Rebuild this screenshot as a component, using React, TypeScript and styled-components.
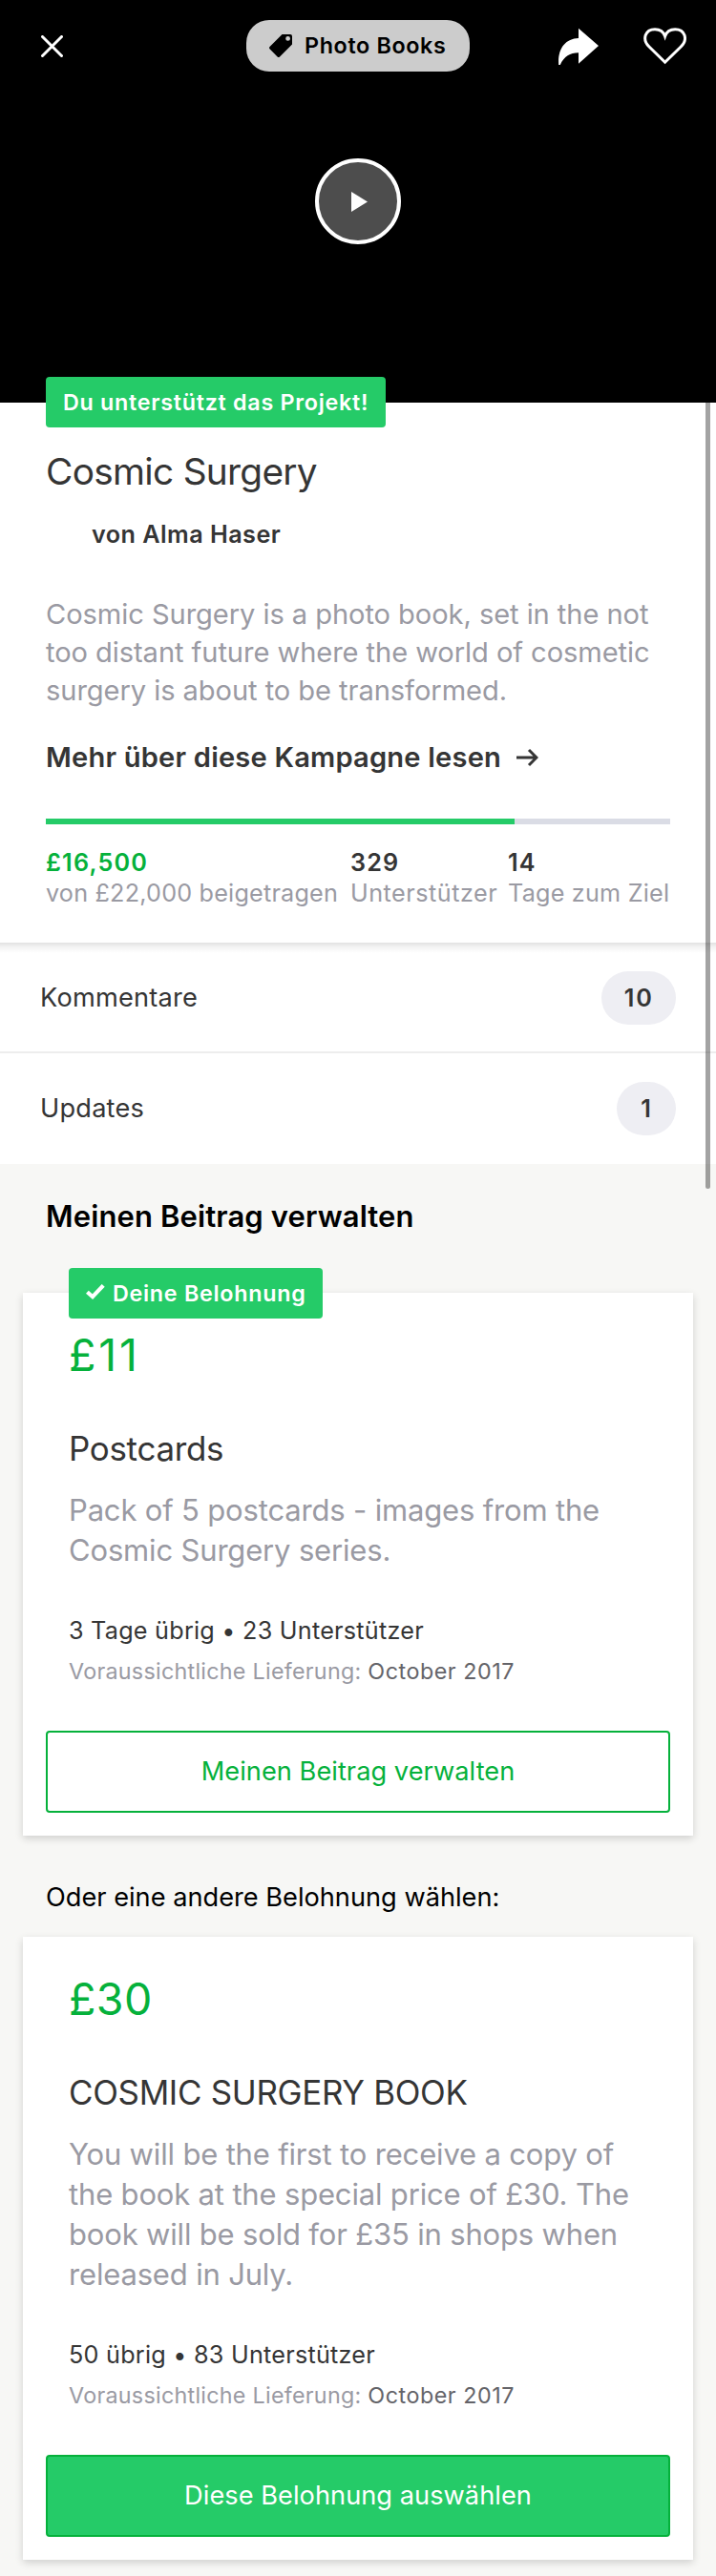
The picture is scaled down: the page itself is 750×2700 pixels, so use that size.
import React from "react";
import styled, { createGlobalStyle, css } from "styled-components";

const color = {
  green: "#25cb68",
  greenDark: "#05b13b",
  ink: "#353535",
  grey: "#9a9aa3",
  greyDark: "#646469",
  track: "#dadce5",
  pill: "#eeeef3",
  page: "#f7f7f5",
};

const type = (size: number, line: number, weight = 400, spacing = 0) => css`
  font-size: ${size}px;
  line-height: ${line}px;
  font-weight: ${weight};
  letter-spacing: ${spacing}px;
`;

const GlobalStyle = createGlobalStyle`
  *, *::before, *::after { box-sizing: border-box; }
  body { margin: 0; background: ${color.page}; color: ${color.ink}; font-family: Inter, "Liberation Sans", sans-serif; }
  h1, h2, h3, p { margin: 0; }
  button { font-family: inherit; margin: 0; cursor: pointer; }
  svg { display: block; flex: none; }
`;

const Page = styled.div`
  width: 750px;
  min-height: 2700px;
  background: ${color.page};
`;

/* Hero */
const Hero = styled.header`
  height: 422px;
  background: #000;
  display: flex;
  flex-direction: column;
  align-items: center;
`;
const TopBar = styled.div`
  width: 100%;
  padding: 21px 31px 0 43px;
  display: grid;
  grid-template-columns: 215px 234px 1fr;
  align-items: center;
`;
const IconButton = styled.button`
  padding: 0;
  border: 0;
  background: none;
  color: #fff;
`;
const Category = styled.span`
  height: 54px;
  padding-left: 24px;
  border-radius: 24px;
  background: #ccc;
  color: #000;
  display: flex;
  align-items: center;
  gap: 13px;
  ${type(23.3, 54, 600, 0.65)}
`;
const Actions = styled.div`
  display: flex;
  justify-content: flex-end;
  gap: 47px;
`;
const PlayButton = styled.button`
  width: 90px;
  height: 90px;
  margin-top: 91px;
  padding: 0 0 0 2px;
  border: 4px solid #fff;
  border-radius: 50%;
  background: #4d4d4d;
  color: #fff;
  display: flex;
  align-items: center;
  justify-content: center;
`;

/* Scrolling body */
const Body = styled.main`
  position: relative;
`;
const ScrollThumb = styled.div`
  position: absolute;
  top: 0;
  right: 6px;
  width: 5px;
  height: 824px;
  border-radius: 0 0 3px 3px;
  background: rgba(0, 0, 0, 0.36);
`;

const Ribbon = styled.div`
  width: max-content;
  height: 53px;
  padding: 0 18px;
  border-radius: 4px;
  background: ${color.green};
  color: #fff;
  display: flex;
  align-items: center;
  gap: 8px;
  ${type(23.3, 53, 600, 0.72)}
`;

const Intro = styled.section`
  display: flow-root;
  background: #fff;
  padding: 0 48px 36px;
`;
const BackerRibbon = styled(Ribbon)`
  margin-top: -27px;
`;
const Title = styled.h1`
  padding-top: 22px;
  ${type(38.8, 48, 400, -0.7)}
`;
const Byline = styled.p`
  margin-top: 26px;
  padding-left: 48px;
  ${type(25.2, 32, 600, 0.46)}
`;
const Blurb = styled.p`
  margin-top: 48px;
  color: ${color.grey};
  ${type(29.1, 40, 400, -0.07)}
`;
const MoreLink = styled.a`
  margin-top: 30px;
  display: flex;
  align-items: center;
  gap: 16px;
  ${type(29.1, 40, 600, 0.2)}
`;
const Track = styled.div`
  margin-top: 44px;
  height: 6px;
  background: ${color.track};
`;
const Fill = styled.div`
  height: 100%;
  background: ${color.green};
`;
const Stats = styled.div`
  margin-top: 24px;
  display: grid;
  grid-template-columns: 319px 165px 1fr;
  white-space: nowrap;
`;
const StatValue = styled.div<{ $accent?: boolean }>`
  color: ${(p) => (p.$accent ? color.greenDark : color.ink)};
  ${type(25.2, 32, 600, 1.2)}
`;
const StatLabel = styled.div<{ $spacing: number }>`
  color: ${color.grey};
  ${type(25.2, 32)}
  letter-spacing: ${(p) => p.$spacing}px;
`;

/* Link rows */
const LinkRows = styled.nav`
  background: linear-gradient(#e2e2e2, #f4f4f4 5px, #fff 11px) #fff;
`;
const LinkRow = styled.a`
  height: 116px;
  padding: 0 42px;
  display: flex;
  align-items: center;
  justify-content: space-between;
  ${type(27.2, 34, 400, 0.2)}

  & + & {
    border-top: 2px solid #ededed;
    height: 118px;
    margin-top: -2px;
  }
`;
const Count = styled.span`
  min-width: 62px;
  height: 56px;
  padding: 0 23px 0 24px;
  border-radius: 28px;
  background: ${color.pill};
  text-align: center;
  ${type(25.2, 56, 600, 2)}
`;

/* Rewards */
const Rewards = styled.section`
  padding: 35px 24px 17px;
`;
const Heading = styled.h2`
  padding-left: 24px;
  color: #000;
  ${type(31, 40, 600, 0.12)}
`;
const SubHeading = styled.p`
  margin-top: 48px;
  padding-left: 24px;
  color: #000;
  ${type(27.2, 34)}
`;
const Card = styled.article<{ $gap: number }>`
  position: relative;
  margin-top: ${(p) => p.$gap}px;
  padding: 37px 24px 24px;
  background: #fff;
  box-shadow: 0 3px 8px rgba(0, 0, 0, 0.16);
`;
const CardText = styled.div`
  padding: 0 24px;
`;
const RewardRibbon = styled(Ribbon)`
  position: absolute;
  top: -26px;
  left: 48px;
`;
const Price = styled.div<{ $spacing: number }>`
  color: ${color.greenDark};
  ${type(46.5, 56)}
  letter-spacing: ${(p) => p.$spacing}px;
`;
const RewardTitle = styled.h3<{ $spacing: number }>`
  margin-top: 48px;
  ${type(34.9, 44)}
  letter-spacing: ${(p) => p.$spacing}px;
`;
const RewardText = styled.p`
  margin-top: 22px;
  color: ${color.grey};
  ${type(31, 42, 400, -0.17)}
`;
const Meta = styled.p`
  margin-top: 47px;
  ${type(25.2, 32, 400, 0.24)}
`;
const Delivery = styled.p`
  margin-top: 11px;
  color: ${color.grey};
  ${type(23.3, 32, 400, 0.27)}

  span {
    color: ${color.greyDark};
    letter-spacing: 0.54px;
  }
`;
const ActionButton = styled.button<{ $filled?: boolean }>`
  width: 100%;
  height: 86px;
  margin-top: 46px;
  padding: 0;
  border: 2px solid ${color.greenDark};
  border-radius: 4px;
  background: ${(p) => (p.$filled ? color.green : "#fff")};
  color: ${(p) => (p.$filled ? "#fff" : color.greenDark)};
  ${type(27.2, 34, 400, 0.04)}
`;

const CloseIcon = () => (
  <svg width="23" height="23" viewBox="0 0 23 23" fill="none" stroke="currentColor" strokeWidth="3" strokeLinecap="round">
    <path d="M1.5 1.5l20 20M21.5 1.5l-20 20" />
  </svg>
);
const TagIcon = () => (
  <svg width="24" height="24" viewBox="0 0 24 24" fill="currentColor" fillRule="evenodd">
    <path d="M13.5 0H22Q24 0 24 2V10.5L11 23.5Q9.8 24.5 8.6 23.5L.5 15.3Q-.4 14.2 .5 13.1ZM19.6 2A2.4 2.4 0 1 0 19.6 6.8A2.4 2.4 0 1 0 19.6 2Z" />
  </svg>
);
const ShareIcon = () => (
  <svg width="42" height="39" viewBox="0 0 42 39" fill="currentColor">
    <path d="M21 .7L42 19L21 37.7V26.3C12 26.3 6 30 1.8 39H.2C-1 22 7 11.5 21 11Z" />
  </svg>
);
const HeartIcon = () => (
  <svg width="45" height="39" viewBox="0 0 45 39" fill="none" stroke="currentColor" strokeWidth="3">
    <path d="M22.6 36.2L6 20C-2 12 2 1.7 12 1.7C17.6 1.7 21.3 5.2 22.6 9C23.9 5.2 27.6 1.7 33.2 1.7C43.2 1.7 47.2 12 39.2 20Z" />
  </svg>
);
const PlayIcon = () => (
  <svg width="17" height="21" viewBox="0 0 17 21" fill="currentColor">
    <path d="M0 0L17 10.5L0 21Z" />
  </svg>
);
const ArrowIcon = () => (
  <svg width="23" height="20" viewBox="0 0 23 20" fill="none" stroke="currentColor" strokeWidth="3">
    <path d="M0 10H21M13 2l8 8-8 8" />
  </svg>
);
const CheckIcon = () => (
  <svg width="20" height="20" viewBox="0 0 20 20" fill="none" stroke="currentColor" strokeWidth="4.2">
    <path d="M1.4 8.2L7 13.2L18.2 1.4" />
  </svg>
);

type Reward = {
  price: string;
  priceSpacing: number;
  title: string;
  titleSpacing: number;
  text: string;
  meta: string;
  date: string;
  action: string;
  owned?: boolean;
};

const myReward: Reward = {
  price: "£11",
  priceSpacing: 2.8,
  title: "Postcards",
  titleSpacing: -0.28,
  text: "Pack of 5 postcards - images from the Cosmic Surgery series.",
  meta: "3 Tage übrig • 23 Unterstützer",
  date: "October 2017",
  action: "Meinen Beitrag verwalten",
  owned: true,
};
const otherReward: Reward = {
  price: "£30",
  priceSpacing: 0.4,
  title: "COSMIC SURGERY BOOK",
  titleSpacing: -0.3,
  text: "You will be the first to receive a copy of the book at the special price of £30. The book will be sold for £35 in shops when released in July.",
  meta: "50 übrig • 83 Unterstützer",
  date: "October 2017",
  action: "Diese Belohnung auswählen",
};

const RewardCard = ({ reward, gap }: { reward: Reward; gap: number }) => (
  <Card $gap={gap}>
    {reward.owned && (
      <RewardRibbon>
        <CheckIcon />
        Deine Belohnung
      </RewardRibbon>
    )}
    <CardText>
      <Price $spacing={reward.priceSpacing}>{reward.price}</Price>
      <RewardTitle $spacing={reward.titleSpacing}>{reward.title}</RewardTitle>
      <RewardText>{reward.text}</RewardText>
      <Meta>{reward.meta}</Meta>
      <Delivery>
        Voraussichtliche Lieferung: <span>{reward.date}</span>
      </Delivery>
    </CardText>
    <ActionButton $filled={!reward.owned}>{reward.action}</ActionButton>
  </Card>
);

const stats = [
  { value: "£16,500", label: "von £22,000 beigetragen", spacing: 0.2, accent: true },
  { value: "329", label: "Unterstützer", spacing: 0.5 },
  { value: "14", label: "Tage zum Ziel", spacing: 0.22 },
];

export default function App() {
  return (
    <Page>
      <GlobalStyle />
      <Hero>
        <TopBar>
          <IconButton aria-label="Schließen">
            <CloseIcon />
          </IconButton>
          <Category>
            <TagIcon />
            Photo Books
          </Category>
          <Actions>
            <IconButton aria-label="Teilen">
              <ShareIcon />
            </IconButton>
            <IconButton aria-label="Merken">
              <HeartIcon />
            </IconButton>
          </Actions>
        </TopBar>
        <PlayButton aria-label="Abspielen">
          <PlayIcon />
        </PlayButton>
      </Hero>
      <Body>
        <Intro>
          <BackerRibbon>Du unterstützt das Projekt!</BackerRibbon>
          <Title>Cosmic Surgery</Title>
          <Byline>von Alma Haser</Byline>
          <Blurb>
            Cosmic Surgery is a photo book, set in the not too distant future where the world of
            cosmetic surgery is about to be transformed.
          </Blurb>
          <MoreLink>
            Mehr über diese Kampagne lesen
            <ArrowIcon />
          </MoreLink>
          <Track>
            <Fill style={{ width: `${(16500 / 22000) * 100}%` }} />
          </Track>
          <Stats>
            {stats.map((s) => (
              <div key={s.label}>
                <StatValue $accent={s.accent}>{s.value}</StatValue>
                <StatLabel $spacing={s.spacing}>{s.label}</StatLabel>
              </div>
            ))}
          </Stats>
        </Intro>
        <LinkRows>
          <LinkRow>
            Kommentare <Count>10</Count>
          </LinkRow>
          <LinkRow>
            Updates <Count>1</Count>
          </LinkRow>
        </LinkRows>
        <Rewards>
          <Heading>Meinen Beitrag verwalten</Heading>
          <RewardCard reward={myReward} gap={60} />
          <SubHeading>Oder eine andere Belohnung wählen:</SubHeading>
          <RewardCard reward={otherReward} gap={24} />
        </Rewards>
        <ScrollThumb />
      </Body>
    </Page>
  );
}
